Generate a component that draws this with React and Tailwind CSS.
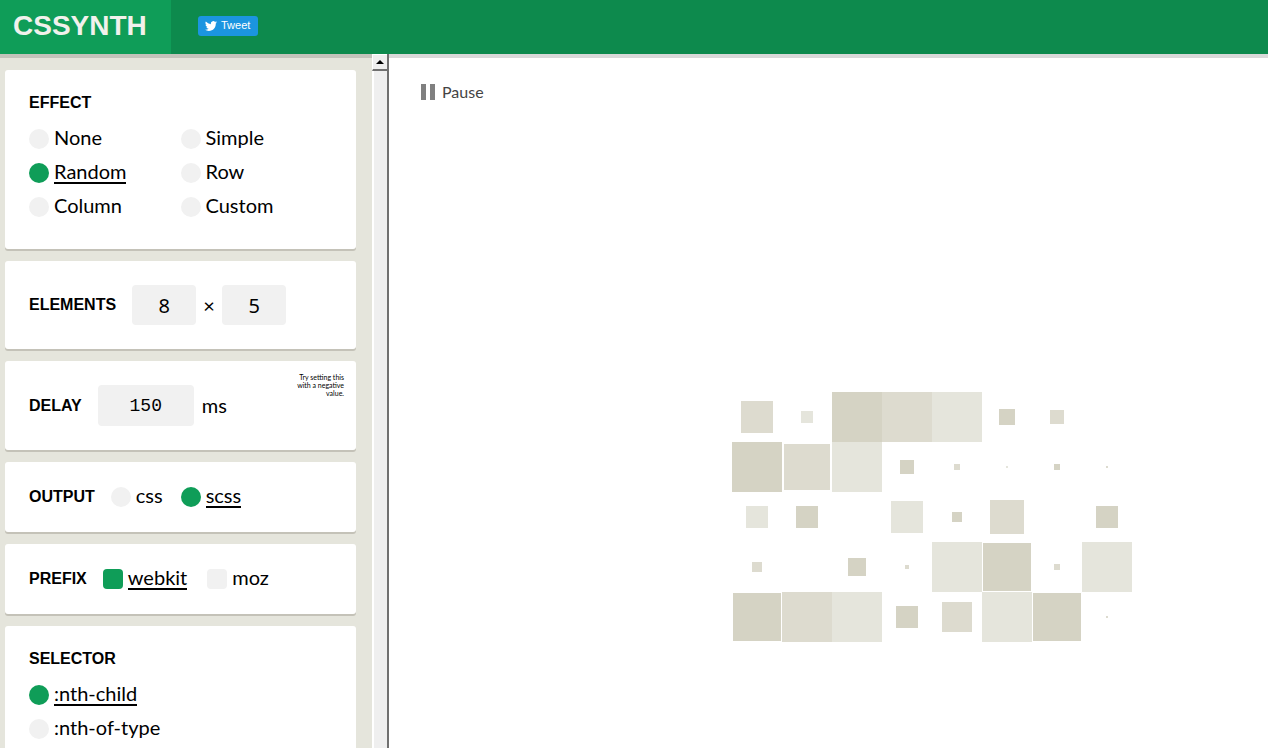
import { useState } from "react";

const SHADES = ["bg-[#d5d3c4]", "bg-[#dddbcf]", "bg-[#e5e5dc]"];

// current size of every square, row by row
const SQUARES = [
  [32, 12, 50, 50, 50, 16, 14, 0],
  [50, 46, 50, 14, 6, 2, 6, 2],
  [22, 22, 0, 32, 10, 34, 0, 22],
  [10, 0, 18, 4, 50, 48, 6, 50],
  [48, 50, 50, 22, 30, 50, 48, 2],
];

function Card({ className = "p-6", children }) {
  return (
    <section
      className={`relative rounded-[3px] bg-white shadow-[0_2px_0_#c4c2b8] ${className}`}
    >
      {children}
    </section>
  );
}

function Title({ children }) {
  return (
    <h2 className="font-['Liberation_Sans',Arial,sans-serif] text-base leading-[18px] font-bold uppercase">
      {children}
    </h2>
  );
}

function Option({ type = "radio", name, label, checked, onChange }) {
  return (
    <label className="flex cursor-pointer items-center gap-[5px]">
      <input
        type={type}
        name={name}
        checked={checked}
        onChange={onChange}
        className={`size-5 shrink-0 appearance-none bg-[#f1f1f1] checked:bg-[#0f9d58] ${
          type === "radio" ? "rounded-full" : "rounded"
        }`}
      />
      <span
        className={`mb-0.5 border-b-2 leading-[22px] ${
          checked ? "border-black" : "border-transparent"
        }`}
      >
        {label}
      </span>
    </label>
  );
}

function Header() {
  return (
    <header className="relative z-10 flex h-[54px] shrink-0 bg-[#0d8a4d] font-['Liberation_Sans',Arial,sans-serif] shadow-[0_4px_0_rgba(0,0,0,0.15)]">
      <h1 className="flex w-[171px] items-center bg-[#0f9d58] pb-0.5 pl-[13px] text-[28px] font-bold text-[#f1f1ec]">
        CSSYNTH
      </h1>
      <a
        href="#tweet"
        className="mt-4 ml-[27px] flex h-5 items-center gap-1 rounded-[3px] bg-[#1b95e0] pr-2 pl-[7px] text-[11px] text-white"
      >
        <svg viewBox="0 0 24 24" className="h-3 w-3 fill-current" aria-hidden="true">
          <path d="M23.95 4.57a10 10 0 0 1-2.82.77 4.96 4.96 0 0 0 2.16-2.72c-.95.55-2 .95-3.13 1.18a4.92 4.92 0 0 0-8.38 4.48A13.93 13.93 0 0 1 1.64 3.16a4.92 4.92 0 0 0 1.52 6.57 4.9 4.9 0 0 1-2.23-.61v.06a4.92 4.92 0 0 0 3.95 4.83 5 5 0 0 1-2.21.08 4.94 4.94 0 0 0 4.6 3.42A9.87 9.87 0 0 1 0 19.54a14 14 0 0 0 7.55 2.21c9.05 0 14-7.5 14-13.98 0-.21 0-.42-.02-.63a9.94 9.94 0 0 0 2.46-2.55z" />
        </svg>
        Tweet
      </a>
    </header>
  );
}

function Scrollbar() {
  return (
    <div className="z-20 flex w-[17px] shrink-0 flex-col border-r-2 border-[#707070] bg-[#efefef]">
      <button
        type="button"
        aria-label="Scroll up"
        className="flex h-[17px] items-center justify-center border-t border-b-2 border-l border-t-white border-b-[#707070] border-l-white"
      >
        <svg viewBox="0 0 8 4" className="h-1 w-2" aria-hidden="true">
          <path d="M0 4h8L4 0z" />
        </svg>
      </button>
      <div className="flex-1 border-l-2 border-white" />
    </div>
  );
}

export default function App() {
  const [effect, setEffect] = useState("Random");
  const [output, setOutput] = useState("scss");
  const [prefixes, setPrefixes] = useState({ webkit: true, moz: false });
  const [selector, setSelector] = useState(":nth-child");
  const [paused, setPaused] = useState(false);

  return (
    <div className="flex h-screen flex-col overflow-hidden bg-white font-[Lato,sans-serif] text-xl text-black">
      <Header />

      <div className="flex min-h-0 flex-1">
        <aside className="flex w-[372px] shrink-0 flex-col gap-3 overflow-hidden bg-[#e5e5dc] pt-4 pr-4 pl-[5px] *:shrink-0">
          <Card className="px-6 pt-6 pb-[25px]">
            <Title>Effect</Title>
            <div className="mt-2.5 grid auto-rows-[34px] grid-cols-2">
              {["None", "Simple", "Random", "Row", "Column", "Custom"].map((item) => (
                <Option
                  key={item}
                  name="effect"
                  label={item}
                  checked={effect === item}
                  onChange={() => setEffect(item)}
                />
              ))}
            </div>
          </Card>

          <Card>
            <div className="flex items-center">
              <Title>Elements</Title>
              <input
                aria-label="Columns"
                defaultValue="8"
                className="ml-4 h-10 w-16 rounded bg-[#f1f1f1] text-center font-['Noto_Sans',sans-serif]"
              />
              <span className="w-[26px] text-center">×</span>
              <input
                aria-label="Rows"
                defaultValue="5"
                className="h-10 w-16 rounded bg-[#f1f1f1] text-center font-['Noto_Sans',sans-serif]"
              />
            </div>
          </Card>

          <Card>
            <div className="flex items-center">
              <Title>Delay</Title>
              <input
                id="delay"
                aria-label="Delay"
                defaultValue="150"
                className="mr-2 ml-4 h-[41px] w-24 rounded bg-[#f1f1f1] text-center font-['Liberation_Mono',monospace] text-lg"
              />
              <label htmlFor="delay" className="mb-0.5">
                ms
              </label>
            </div>
            <p className="absolute top-3 right-3 w-14 text-right text-[7px] leading-2">
              Try setting this with a negative value.
            </p>
          </Card>

          <Card>
            <div className="flex h-[22px] items-center">
              <Title>Output</Title>
              <div className="ml-4 flex gap-[18px]">
                {["css", "scss"].map((item) => (
                  <Option
                    key={item}
                    name="output"
                    label={item}
                    checked={output === item}
                    onChange={() => setOutput(item)}
                  />
                ))}
              </div>
            </div>
          </Card>

          <Card>
            <div className="flex h-[22px] items-center">
              <Title>Prefix</Title>
              <div className="ml-4 flex gap-5">
                {["webkit", "moz"].map((item) => (
                  <Option
                    key={item}
                    type="checkbox"
                    name={item}
                    label={item}
                    checked={prefixes[item]}
                    onChange={() => setPrefixes({ ...prefixes, [item]: !prefixes[item] })}
                  />
                ))}
              </div>
            </div>
          </Card>

          <Card>
            <Title>Selector</Title>
            <div className="mt-2.5 grid auto-rows-[34px]">
              {[":nth-child", ":nth-of-type"].map((item) => (
                <Option
                  key={item}
                  name="selector"
                  label={item}
                  checked={selector === item}
                  onChange={() => setSelector(item)}
                />
              ))}
            </div>
          </Card>
        </aside>

        <Scrollbar />

        <main className="flex flex-1 flex-col items-start px-8 pt-6">
          <button
            type="button"
            onClick={() => setPaused(!paused)}
            className="flex items-center gap-[7px] text-base leading-7 text-[#444]"
          >
            <svg viewBox="0 0 14 16" className="h-4 w-[14px] fill-[#808080]" aria-hidden="true">
              <path d="M0 0h5v16H0zM9 0h5v16H9z" />
            </svg>
            Pause
          </button>

          <div className="mt-[286px] self-center pl-[207px]">
            <div className="grid auto-rows-[50px] grid-cols-[repeat(8,50px)] place-items-center">
              {SQUARES.flat().map((size, i) => (
                <div
                  key={i}
                  className={SHADES[(i + 1) % 3]}
                  style={{ width: size, height: size }}
                />
              ))}
            </div>
          </div>
        </main>
      </div>
    </div>
  );
}
